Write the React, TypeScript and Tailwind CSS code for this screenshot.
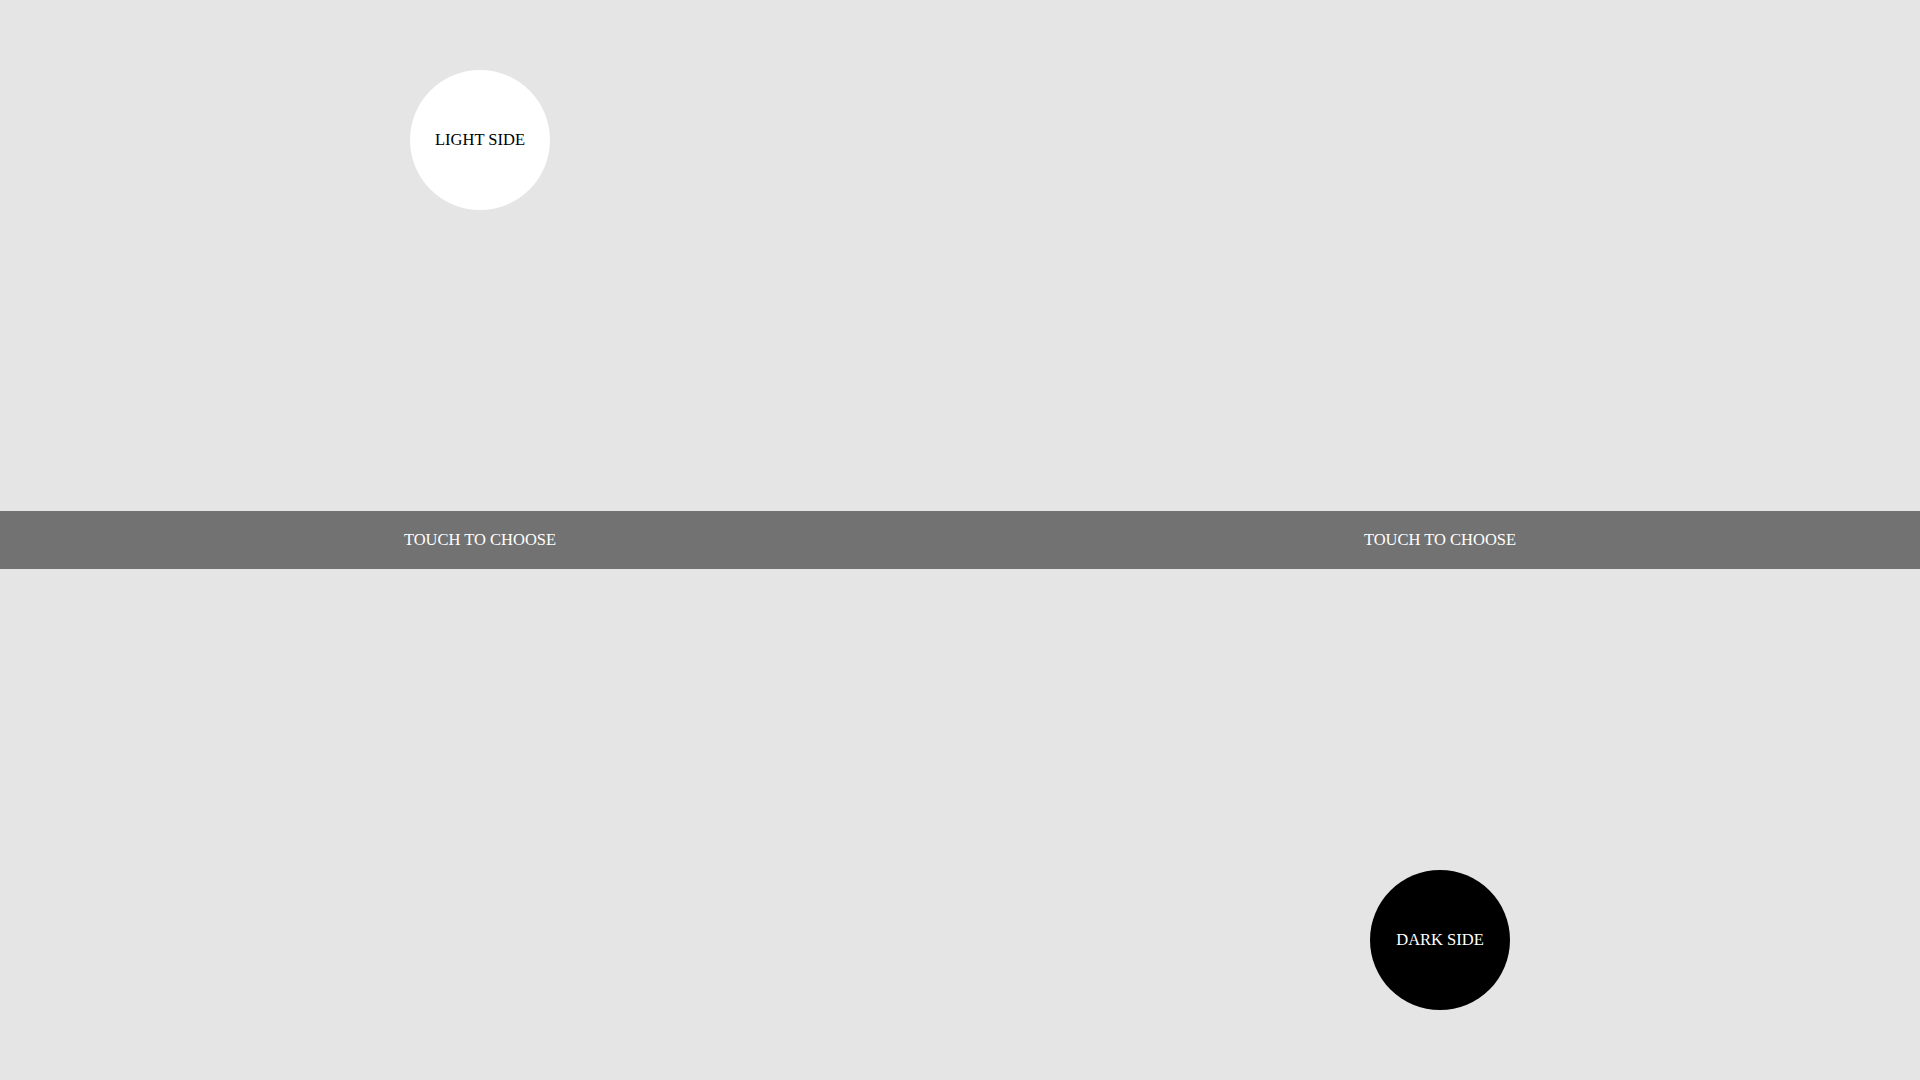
import React from "react";

export default function App() {
  return (
    <div
      className="flex h-screen w-full flex-col bg-[#e5e5e5] text-[16.5px]"
      style={{ fontFamily: '"Liberation Serif", "Times New Roman", serif' }}
    >
      <div className="grid flex-1 grid-cols-2">
        <div className="flex justify-center pt-[70px]">
          <div className="flex h-[140px] w-[140px] items-center justify-center rounded-full bg-white text-black">
            LIGHT SIDE
          </div>
        </div>
        <div />
      </div>
      <div className="grid h-[58px] grid-cols-2 bg-[#727272] text-white">
        <div className="flex items-center justify-center">TOUCH TO CHOOSE</div>
        <div className="flex items-center justify-center">TOUCH TO CHOOSE</div>
      </div>
      <div className="grid flex-1 grid-cols-2">
        <div />
        <div className="flex items-end justify-center pb-[70px]">
          <div className="flex h-[140px] w-[140px] items-center justify-center rounded-full bg-black text-white">
            DARK SIDE
          </div>
        </div>
      </div>
    </div>
  );
}
